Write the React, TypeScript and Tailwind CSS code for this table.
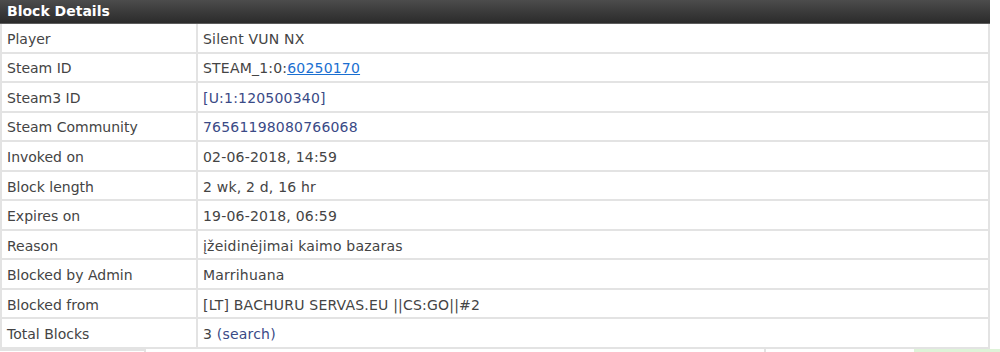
const ROWS: { label: string; value: React.ReactNode }[] = [
  { label: 'Player', value: 'Silent VUN NX' },
  {
    label: 'Steam ID',
    value: (
      <>
        STEAM_1:0:<a className="text-[#1a6fd1] underline">60250170</a>
      </>
    ),
  },
  { label: 'Steam3 ID', value: <span className="text-[#3a4a86]">[U:1:120500340]</span> },
  { label: 'Steam Community', value: <span className="text-[#3a4a86]">76561198080766068</span> },
  { label: 'Invoked on', value: '02-06-2018, 14:59' },
  { label: 'Block length', value: '2 wk, 2 d, 16 hr' },
  { label: 'Expires on', value: '19-06-2018, 06:59' },
  { label: 'Reason', value: 'įžeidinėjimai kaimo bazaras' },
  { label: 'Blocked by Admin', value: 'Marrihuana' },
  { label: 'Blocked from', value: '[LT] BACHURU SERVAS.EU ||CS:GO||#2' },
  {
    label: 'Total Blocks',
    value: (
      <>
        3 <span className="text-[#3a4a86]">(search)</span>
      </>
    ),
  },
];

export default function App() {
  return (
    <div className="h-[352px] w-[1000px] overflow-hidden bg-white font-['DejaVu_Sans',Verdana,sans-serif] text-[14px] text-[#444]">
      <div className="w-[990px] border-x-2 border-[#e3e3e3]">
        <div className="-mx-[2px] flex h-[24px] items-center border-b border-[#5c5c5c] bg-gradient-to-b from-[#4c4c4c] to-[#2b2b2b] px-[7px] text-[14px] font-bold text-white">
          Block Details
        </div>
        {ROWS.map((row) => (
          <div key={row.label} className="flex h-[29.55px] border-b-2 border-[#e3e3e3]">
            <div className="flex w-[196px] items-center border-r-2 border-[#e3e3e3] pt-[3px] pl-[5px]">
              {row.label}
            </div>
            <div className="flex flex-1 items-center pt-[3px] pl-[5px]">
              <span className="tracking-[0.2px]">{row.value}</span>
            </div>
          </div>
        ))}
      </div>
      <div className="flex h-[5px]">
        <div className="w-[146px] border-t-2 border-r-2 border-[#e3e3e3]" />
        <div className="w-[620px] border-r-2 border-[#e3e3e3]" />
        <div className="w-[148px]" />
        <div className="flex-1 bg-[#def3d8]" />
      </div>
    </div>
  );
}
